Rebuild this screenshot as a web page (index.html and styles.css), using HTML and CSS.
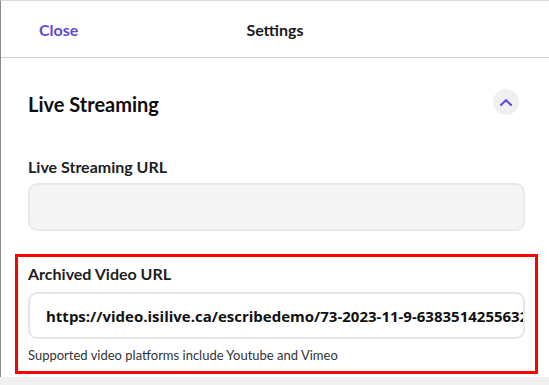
FILE: index.html
```html
<!DOCTYPE html>
<html lang="en">
<head>
<meta charset="utf-8">
<title>Settings</title>
<link rel="stylesheet" href="styles.css">
</head>
<body>
<div class="panel">
  <header class="header">
    <a class="close" href="#">Close</a>
    <h1 class="title">Settings</h1>
    <span></span>
  </header>
  <section class="section">
    <div class="section-head">
      <h2 class="section-title">Live Streaming</h2>
      <button class="toggle" aria-label="Collapse">
        <svg width="12" height="7" viewBox="0 0 12 7"><path d="M1 6 L6 1.2 L11 6" fill="none" stroke="#5a48de" stroke-width="2" stroke-linecap="square"/></svg>
      </button>
    </div>
    <div class="field">
      <label class="label">Live Streaming URL</label>
      <div class="input input-empty"></div>
    </div>
    <div class="field field-highlight">
      <label class="label">Archived Video URL</label>
      <div class="input input-filled"><span class="value">https://video.isilive.ca/escribedemo/73-2023-11-9-638351425563200000.mp4</span></div>
      <p class="hint">Supported video platforms include Youtube and Vimeo</p>
    </div>
  </section>
</div>
</body>
</html>
```

FILE: styles.css
```css
html, body {
  margin: 0;
  padding: 0;
}
body {
  background: #f0f0f0;
  font-family: Lato, "Noto Sans", sans-serif;
  width: 549px;
  height: 385px;
  overflow: hidden;
}
.panel {
  background: #ffffff;
  height: 377px;
  border-left: 1px solid #8a8a8a;
  border-top: 1px solid #dcdcdc;
  box-sizing: border-box;
}
.header {
  height: 57px;
  border-bottom: 1px solid #cfcfcf;
  display: grid;
  grid-template-columns: 1fr auto 1fr;
  align-items: center;
  padding: 0 38px;
  box-sizing: border-box;
}
.close {
  color: #6249d8;
  font-weight: 700;
  font-size: 16px;
  text-decoration: none;
  justify-self: start;
}
.title {
  margin: 0;
  font-size: 16px;
  font-weight: 700;
  color: #1a1a1a;
}
.section {
  padding: 31px 24px 0 27px;
}
.section-head {
  display: flex;
  align-items: center;
  justify-content: space-between;
  height: 26px;
}
.section-title {
  margin: 0;
  font-size: 20px;
  font-weight: 700;
  color: #0d0d0d;
  line-height: 24px;
  padding-top: 3px;
}
.toggle {
  width: 26px;
  height: 26px;
  border-radius: 50%;
  border: none;
  background: #f0eff2;
  display: flex;
  align-items: center;
  justify-content: center;
  padding: 0;
  margin-right: 6px;
}
.field {
  display: flex;
  flex-direction: column;
}
.label {
  font-size: 16px;
  font-weight: 700;
  color: #1e1e1e;
  line-height: 20px;
  margin-top: 0;
}
.section-head + .field {
  margin-top: 42px;
}
.section-head + .field .input {
  margin-top: 6px;
}
.input {
  height: 48px;
  border-radius: 9px;
  box-sizing: border-box;
  width: 497px;
}
.input-empty {
  background: #f5f5f5;
  border: 2px solid #e9e9e9;
}
.field-highlight {
  margin: 23px -13px 0 -13px;
  border: 3px solid #ff0000;
  padding: 7px 10px 6px 10px;
  height: 120px;
  box-sizing: border-box;
}
.field-highlight .label {
  margin-bottom: 8px;
}
.input-filled {
  background: #ffffff;
  border: 2px solid #e6e6e6;
  height: 47px;
  overflow: hidden;
  white-space: nowrap;
  display: flex;
  align-items: center;
  padding-left: 16px;
}
.value {
  font-family: "Open Sans", "Noto Sans", sans-serif;
  font-weight: 700;
  font-size: 15px;
  color: #111111;
}
.hint {
  margin: 8px 0 0 0;
  font-size: 13px;
  color: #333333;
  line-height: 16px;
}
```
